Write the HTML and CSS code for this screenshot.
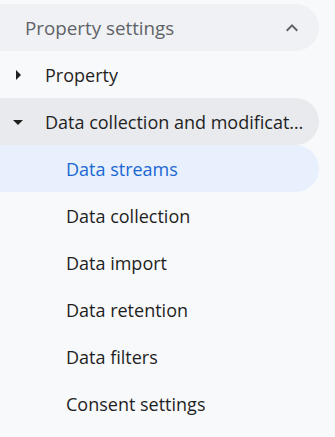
FILE: index.html
```html
<!DOCTYPE html>
<html>
<head>
<meta charset="utf-8">
<link rel="stylesheet" href="styles.css">
</head>
<body>
<nav class="nav">
  <div class="row header">
    <span class="label">Property settings</span>
    <svg class="chev" viewBox="0 0 24 24" width="24" height="24"><path d="M12 8l-6 6 1.41 1.41L12 10.83l4.59 4.58L18 14z"/></svg>
  </div>
  <div class="row group">
    <svg class="tri" viewBox="0 0 24 24" width="24" height="24"><path d="M10 17l5-5-5-5z"/></svg>
    <span class="label">Property</span>
  </div>
  <div class="row group open">
    <svg class="tri" viewBox="0 0 24 24" width="24" height="24"><path d="M7 10l5 5 5-5z"/></svg>
    <span class="label">Data collection and modification</span>
  </div>
  <div class="row sub active"><span class="label">Data streams</span></div>
  <div class="row sub"><span class="label">Data collection</span></div>
  <div class="row sub"><span class="label">Data import</span></div>
  <div class="row sub"><span class="label">Data retention</span></div>
  <div class="row sub"><span class="label">Data filters</span></div>
  <div class="row sub"><span class="label">Consent settings</span></div>
</nav>
</body>
</html>
```
FILE: styles.css
```css
html, body {
  margin: 0;
  padding: 0;
  background: #f8f9fa;
}
body {
  font-family: "Open Sans", "Liberation Sans", sans-serif;
  color: #1f1f1f;
}
.nav {
  width: 319px;
  padding-top: 4px;
  display: flex;
  flex-direction: column;
}
.row {
  height: 47px;
  display: flex;
  align-items: center;
  border-radius: 0 24px 24px 0;
  font-size: 18px;
  font-weight: 500;
  min-width: 0;
}
.label {
  white-space: nowrap;
  overflow: hidden;
  text-overflow: ellipsis;
  min-width: 0;
}
.header {
  background: #eff1f4;
  color: #5f6368;
  font-size: 18.8px;
  padding-left: 25px;
  padding-right: 15px;
  justify-content: space-between;
}
.chev {
  fill: #5f6368;
  flex: none;
}
.group {
  padding-left: 6px;
  padding-right: 14px;
}
.tri {
  fill: #1f1f1f;
  flex: none;
  margin-right: 15px;
}
.open {
  background: #e8eaed;
}
.sub {
  padding-left: 66px;
}
.active {
  background: #e8f0fe;
  color: #1967d2;
}
```
